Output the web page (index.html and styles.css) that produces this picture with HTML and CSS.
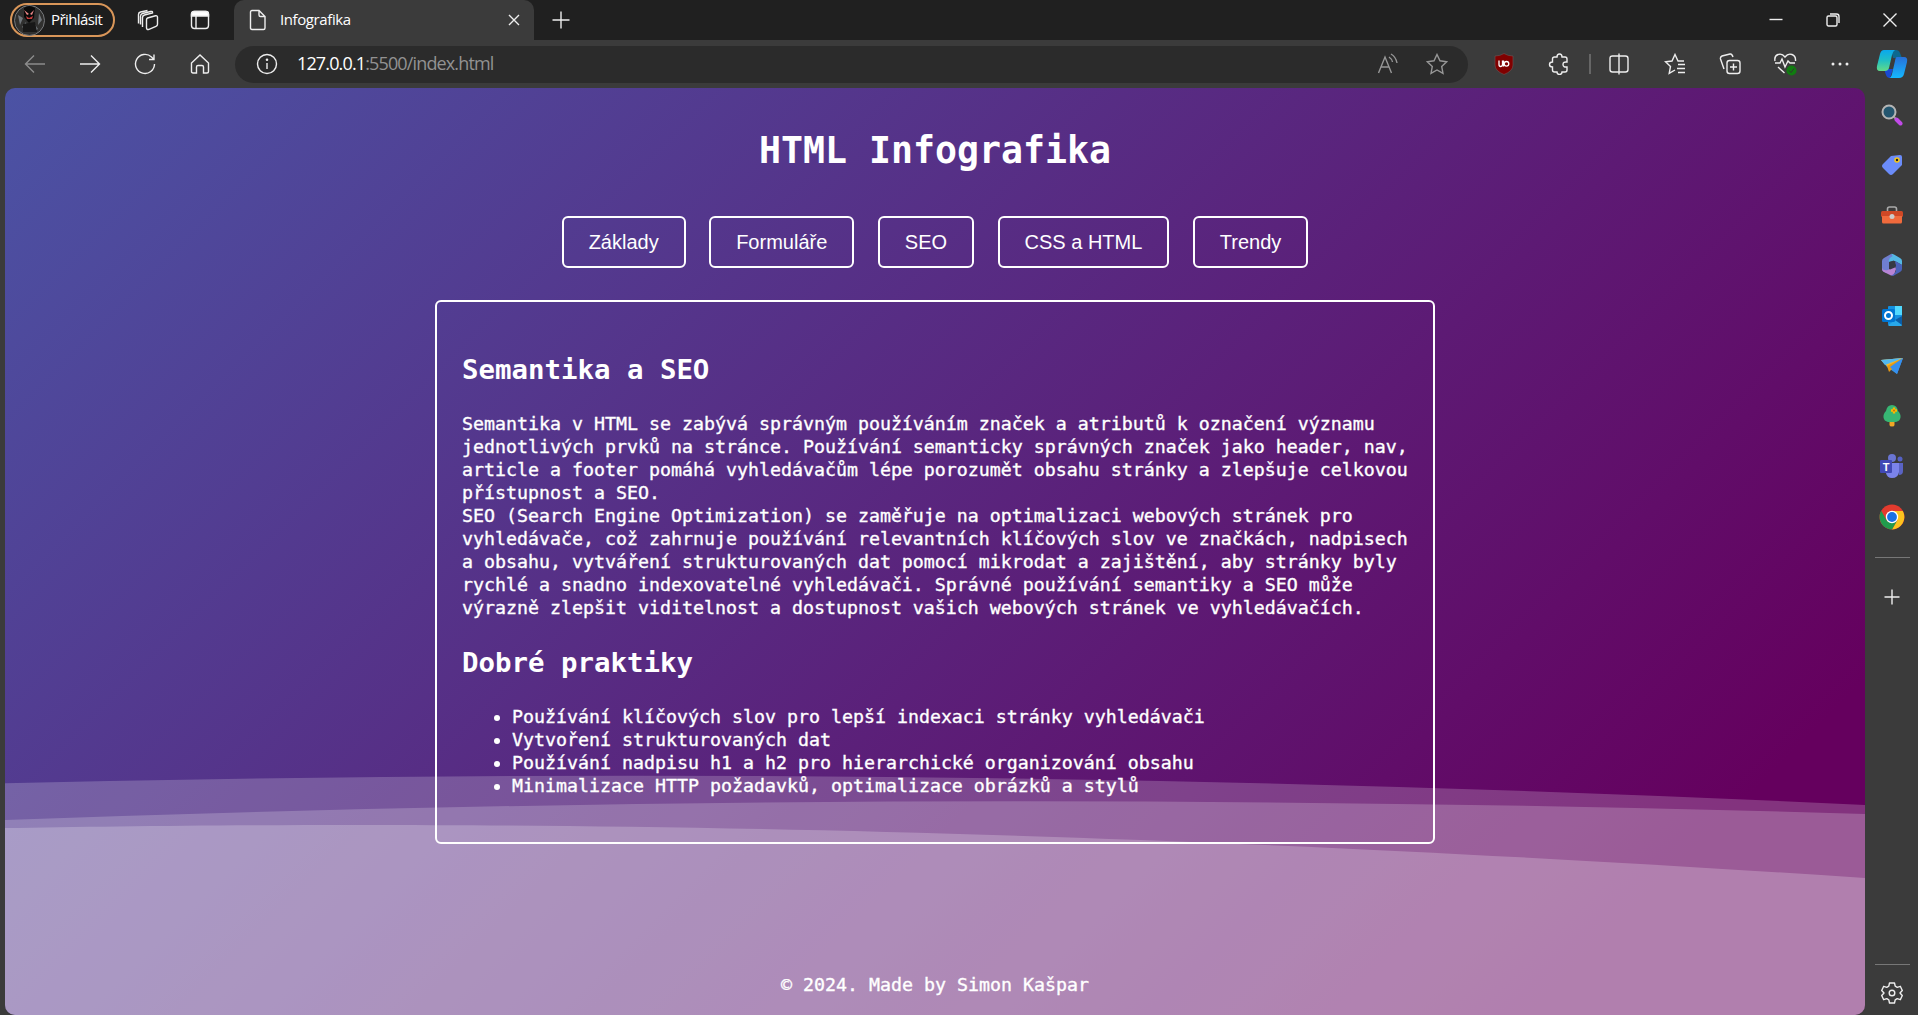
FILE: index.html
```html
<!DOCTYPE html>
<html lang="cs">
<head>
<meta charset="utf-8">
<title>Infografika</title>
<link rel="stylesheet" href="styles.css">
</head>
<body>
<header class="titlebar">
  <div class="profile">
    <svg class="avatar" width="31" height="31" viewBox="0 0 31 31"><circle cx="15.500" cy="15.500" r="15" fill="#30302f" stroke="#77797c"/><path d="M4 10l5 3-3 7zM25 8l3 7-4 5zM8 22l4-5 2 10zM20 18l4 6-5 3z" fill="#70757a"/><path d="M10 3q5-4 11 0l-1 10-5 5-5-6z" fill="#090909"/><path d="M10 5l5 4-2 1zM20 5l-4 4 2 1z" fill="#e88"/><path d="M12 11l3 2 4-2-1 3h-5z" fill="#c53b3b"/><path d="M9 19l12-2 2 10H9z" fill="#171717"/></svg>
    <span class="login">Přihlásit</span>
  </div>
  <div class="cell workspaces"><svg width="22" height="22" viewBox="0 0 22 22" class="line"><path d="M10.500 9l8-2.200q2-.4 2 1.500v7q0 1.500-1.500 2l-7 3q-2.500.8-2.500-1.500v-8q0-1.400 1-1.800z"/><path d="M6 17.500V8q0-2 2-2.500l8-2V2.500q0-1-2-.500l-8 2q-2 .500-2 3V15M2 14V5q0-2 2-2.500l7-1.500" transform="translate(-.5 .5)"/></svg></div>
  <div class="cell tab-actions"><svg width="20" height="20" viewBox="0 0 20 20" class="line"><rect x="1.500" y="1.500" width="17" height="17" rx="3"/><path d="M1.500 6V4q0-2.500 2.500-2.500h12q2.500 0 2.500 2.500v2z" fill="#fff"/><path d="M6 6v12"/></svg></div>
  <div class="tab">
    <svg width="18" height="22" viewBox="0 0 18 22" class="line"><path d="M3 1.500h7l6 6V19q0 1.500-1.500 1.500H3Q1.500 20.500 1.500 19V3Q1.500 1.500 3 1.500zM10 1.500V6q0 1.500 1.500 1.500H16"/></svg>
    <span class="tab-title">Infografika</span>
    <svg width="12" height="12" viewBox="0 0 12 12" class="line"><path d="M1 1l10 10M11 1L1 11"/></svg>
  </div>
  <div class="cell new-tab"><svg width="18" height="18" viewBox="0 0 18 18" class="line"><path d="M9 .5v17M.5 9h17"/></svg></div>
  <div class="window-controls">
    <div class="cell"><svg width="14" height="14" viewBox="0 0 14 14" class="line"><path d="M.5 6.500h13"/></svg></div>
    <div class="cell"><svg width="14" height="14" viewBox="0 0 14 14" class="line"><rect x="1" y="3" width="10" height="10" rx="1.500"/><path d="M4 1h6.500Q13 1 13 3.500V10"/></svg></div>
    <div class="cell"><svg width="14" height="14" viewBox="0 0 14 14" class="line"><path d="M.5.5l13 13M13.500.5l-13 13"/></svg></div>
  </div>
</header>
<nav class="toolbar">
  <div class="cell dim"><svg width="22" height="20" viewBox="0 0 22 20" class="line"><path d="M21 10H1.500M10 1.500L1.500 10l8.500 8.500"/></svg></div>
  <div class="cell"><svg width="22" height="20" viewBox="0 0 22 20" class="line"><path d="M1 10h19.500M12 1.500l8.500 8.500-8.500 8.500"/></svg></div>
  <div class="cell"><svg width="22" height="22" viewBox="0 0 22 22" class="line"><path d="M20.500 11a9.500 9.500 0 1 1-3-7l2 2M20 1.500V6.500h-5"/></svg></div>
  <div class="cell"><svg width="20" height="20" viewBox="0 0 20 20" class="line"><path d="M1.500 9L10 1l8.500 8v8.500q0 1.500-1.500 1.500h-3.500v-6q0-1.500-1.500-1.500H8q-1.500 0-1.500 1.500v6H3q-1.500 0-1.500-1.500z"/></svg></div>
  <div class="address">
    <svg width="22" height="22" viewBox="0 0 22 22" class="line"><circle cx="11" cy="11" r="9.500"/><path d="M11 10v6"/><circle cx="11" cy="6.800" r=".6"/></svg>
    <span class="url"><b>127.0.0.1</b>:5500/index.html</span>
    <svg class="read" width="22" height="22" viewBox="0 0 22 22"><path d="M1.500 20L8 4l6.500 16M4 14h8M12 4q3 2 3.500 5M14 1q5 3 6 9"/></svg>
    <svg class="star" width="22" height="22" viewBox="0 0 22 22"><path d="M11 1.500l3 6.300 6.700.900-5 4.700 1.300 7-6-3.400-6 3.400 1.300-7-5-4.700 6.700-.900z"/></svg>
  </div>
  <div class="cell shield"><svg width="20" height="22" viewBox="0 0 20 22"><path d="M10 .5Q14 3 19 3v9q0 6-9 9.500Q1 18 1 12V3q5 0 9-2.500z" fill="#800000" stroke="#6b5555" stroke-width=".6"/><path d="M5 7.500v4q0 2 1.700 2t1.800-2v-4M9.500 7.500v6" fill="none" stroke="#fff" stroke-width="1.300"/><circle cx="12.500" cy="10.800" r="2.300" fill="none" stroke="#fff" stroke-width="1.300"/></svg></div>
  <div class="cell"><svg width="22" height="22" viewBox="0 0 22 22" class="line"><path d="M6.500 4H9q0-3 2.500-3T14 4h3q2 0 2 2v3q-4-.5-4 2.500t4 2.500v3q0 2-2 2h-3q0 2.500-2.500 2.500T9 19H6.500q-2 0-2-2v-3Q1.500 14 1.500 11.500T4.500 9V6q0-2 2-2z"/></svg></div>
  <div class="separator"></div>
  <div class="cell"><svg width="22" height="22" viewBox="0 0 22 22" class="line"><path d="M8 3H4.500Q2 3 2 5.500v11Q2 19 4.500 19H8M14 3h3.500Q20 3 20 5.500v11q0 2.500-2.500 2.500H14M8 3h3M8 19h3M11 3h3M11 19h3M11 .5v21"/></svg></div>
  <div class="cell"><svg width="22" height="22" viewBox="0 0 22 22" class="line"><path d="M20 8h-6l-3-6.500L8 8l-6.500.8 5 4.600-1.300 7L11 17M14 11.500h7M13 15.500h8M14 19.500h7"/></svg></div>
  <div class="cell"><svg width="22" height="22" viewBox="0 0 22 22" class="line"><rect x="8" y="7.500" width="13" height="13" rx="2.500"/><path d="M14.500 10.500v7M11 14h7M5 16L1.500 6Q1 4 3 3l8-2q2-.5 3 3"/></svg></div>
  <div class="cell"><svg width="24" height="24" viewBox="0 0 24 24" class="line"><path d="M2 9Q1 4 5 2.500T12 5q3-4 7-2.500T22.500 9M2 11h5l2-4 3 8 3-6 2 2h5M5 15l6.500 6"/><circle cx="18.500" cy="18.500" r="5" fill="#107c10" stroke="none"/><path d="M16 18.500l2 2 3-4" stroke="#333" stroke-width="1"/></svg></div>
  <div class="cell"><svg width="18" height="6" viewBox="0 0 18 6" fill="#eee"><circle cx="2" cy="3" r="1.500"/><circle cx="9" cy="3" r="1.500"/><circle cx="16" cy="3" r="1.500"/></svg></div>
  <div class="cell copilot"><svg width="32" height="30" viewBox="0 0 32 30"><defs><linearGradient id="ca" x2="0" y2="1"><stop stop-color="#0aa8ee"/><stop offset=".5" stop-color="#21bfc4"/><stop offset="1" stop-color="#62db87"/></linearGradient><linearGradient id="cb" x2="0" y2="1"><stop stop-color="#2870d8"/><stop offset="1" stop-color="#14b8ff"/></linearGradient></defs><path d="M15 1h5q3 0 4 3l2 5h-9z" fill="#0c688f"/><path d="M8 20h9l-3 9q-3 0-4-3z" fill="#194ad2"/><path d="M8 1h11q-2 1-3 5l-3 13q-1 3-4 3H4q-4 0-3-5L4 5q1-4 4-4z" fill="url(#ca)"/><path d="M21 8h7q4 0 3 5l-3 12q-1 4-5 4H13q2 0 3-4l3-13q.5-4 2-4z" fill="url(#cb)"/></svg></div>
</nav>
<div class="workspace">
  <main class="page">
    <svg class="waves" viewBox="0 0 1860 927" preserveAspectRatio="none"><path d="M0 695.300Q930 672.700 1860 717V927H0z" opacity=".2"/><path d="M0 732Q930 698 1860 726V927H0z" opacity=".2"/><path d="M0 740C310 735 930 728 1860 790V927H0z" opacity=".225"/></svg>
    <h1>HTML Infografika</h1>
    <div class="topics">
      <button>Základy</button><button>Formuláře</button><button>SEO</button><button>CSS a HTML</button><button>Trendy</button>
    </div>
    <article class="card">
      <h2>Semantika a SEO</h2>
      <p>Semantika v HTML se zabývá správným používáním značek a atributů k označení významu<br>jednotlivých prvků na stránce. Používání semanticky správných značek jako header, nav,<br>article a footer pomáhá vyhledávačům lépe porozumět obsahu stránky a zlepšuje celkovou<br>přístupnost a SEO.<br>SEO (Search Engine Optimization) se zaměřuje na optimalizaci webových stránek pro<br>vyhledávače, což zahrnuje používání relevantních klíčových slov ve značkách, nadpisech<br>a obsahu, vytváření strukturovaných dat pomocí mikrodat a zajištění, aby stránky byly<br>rychlé a snadno indexovatelné vyhledávači. Správné používání semantiky a SEO může<br>výrazně zlepšit viditelnost a dostupnost vašich webových stránek ve vyhledávačích.</p>
      <h2>Dobré praktiky</h2>
      <ul>
        <li>Používání klíčových slov pro lepší indexaci stránky vyhledávači</li>
        <li>Vytvoření strukturovaných dat</li>
        <li>Používání nadpisu h1 a h2 pro hierarchické organizování obsahu</li>
        <li>Minimalizace HTTP požadavků, optimalizace obrázků a stylů</li>
      </ul>
    </article>
    <footer>© 2024. Made by Simon Kašpar</footer>
  </main>
  <aside class="sidebar">
    <div class="app"><svg width="22" height="22" viewBox="0 0 22 22"><path d="M12 12l3 3" stroke="#999" stroke-width="2"/><path d="M15.500 15.500l4 4" stroke="#c14ae8" stroke-width="4" stroke-linecap="round"/><circle cx="8" cy="8" r="6.500" fill="#24566f" stroke="#b5b5b5" stroke-width="2"/></svg></div>
    <div class="app"><svg width="22" height="22" viewBox="0 0 22 22"><path d="M10 2l9-1q2 0 2 2v8l-9 9q-2 2-4 0l-6-6q-2-2 0-4z" fill="#6b8cfa"/><circle cx="16" cy="6" r="2" fill="#222" stroke="#f4c51c" stroke-width="1.600"/></svg></div>
    <div class="app"><svg width="24" height="20" viewBox="0 0 24 20"><path d="M7.500 6V4q0-2 2-2h5q2 0 2 2v2" fill="none" stroke="#aaa" stroke-width="1.600"/><rect x="1" y="6" width="22" height="6" rx="1.500" fill="#cf4826"/><path d="M2 11h20v6q0 1.500-1.500 1.500h-17Q2 18.500 2 17z" fill="#f06a3c"/><circle cx="12" cy="11.500" r="2.500" fill="#ccc"/></svg></div>
    <div class="app"><svg width="22" height="24" viewBox="0 0 22 24"><path d="M10 1L3 5q-2 1-2 3v8q0 2 2 3l3 1 2-3V8q0-2 2-3l4-2z" fill="#6f7fd0"/><path d="M10 1q1-.5 3 .5l6 3.500q2 1 2 3v4l-7-4-6 1q-1-3 2-5 3-1 0-3z" fill="#54b8e4"/><path d="M1 15q1 3 6 2l7-4 1 3-2 6q-2 1-4 0l-6-3q-2-1-2-4z" fill="#b884d5"/><path d="M14 8l7 4v4q0 2-2 3l-6 3.500q-2 .5-3 0 5-2 5-6z" fill="#4a62ba"/><path d="M8 9l5-1.500 2 5-1 2-5 2-1-1z" fill="#363a44"/></svg></div>
    <div class="app"><svg width="22" height="22" viewBox="0 0 22 22"><rect x="7" y="1" width="14" height="19" rx="1" fill="#1490df"/><path d="M14 1h7v9h-7z" fill="#50d9ff"/><path d="M7 20l14-9v9q0 1-1 1H8z" fill="#28a8ea"/><path d="M14 15l7-4v9z" fill="#0a5ca5"/><rect x="1" y="4" width="13" height="13" rx="1.500" fill="#0075d2"/><circle cx="7.500" cy="10.500" r="3.500" fill="none" stroke="#fff" stroke-width="2"/></svg></div>
    <div class="app"><svg width="24" height="18" viewBox="0 0 24 18"><path d="M1 3l22-2-6 16-10-7z" fill="#369be8"/><path d="M1 3l22-2L8 10z" fill="#f5b92b"/><path d="M1 3l22-2L5 8z" fill="#52b9f1"/><path d="M7 9l16-8L9 15z" fill="#e79a16"/><path d="M10 10L23 1l-6 16z" fill="#368ff0"/></svg></div>
    <div class="app"><svg width="20" height="24" viewBox="0 0 20 24"><path d="M7.500 16h5v5q0 1.500-2.500 1.500T7.500 21z" fill="#f0a726"/><path d="M10 1q5 0 6 6 3 3 2.500 6.500T14 18H6Q2 17 1.500 13.500T4 7q1-6 6-6z" fill="#37b673"/><path d="M12 3.500v6M9 6.500h6" stroke="#ffb800" stroke-width="2.400"/><circle cx="12" cy="6.500" r="1" fill="#bd6f12"/></svg></div>
    <div class="app"><svg width="26" height="26" viewBox="0 0 26 26"><circle cx="13" cy="5" r="4" fill="#6a75d3"/><circle cx="21" cy="6" r="2.500" fill="#5561c4"/><path d="M18 10h6v8q0 4-4 4z" fill="#5a63c4"/><path d="M8 10h12v9q-1 6-7 6-5 0-6-5z" fill="#7b83eb"/><rect x="1" y="7" width="12" height="13" rx="1" fill="#4149b5"/><text x="7" y="17.500" class="teams-letter">T</text></svg></div>
    <div class="app"><svg width="26" height="26" viewBox="0 0 26 26"><circle cx="13" cy="13" r="12.500" fill="#e33b2e"/><path d="M13 25.500A12.500 12.500 0 0 0 23.800 7H13l5.500 9z" fill="#fcc31e"/><path d="M2.200 6.800L8 17l5 2 5-2.200-5 8.700A12.500 12.500 0 0 1 2.200 6.800z" fill="#219b4c"/><circle cx="13" cy="13" r="6.200" fill="#fff"/><circle cx="13" cy="13" r="4.900" fill="#1b70e5"/></svg></div>
    <div class="rule"></div>
    <div class="add"><svg width="16" height="16" viewBox="0 0 16 16" class="line"><path d="M8 .5v15M.5 8h15"/></svg></div>
    <div class="rule bottom"></div>
    <div class="settings"><svg width="22" height="22" viewBox="0 0 22 22" class="line"><path d="M8.500 1h5l.7 3.200 2 1.100 3.100-1 2 4.200L19 11l2.300 2.500-2 4.200-3.100-1-2 1.100-.7 3.200h-5l-.7-3.200-2-1.100-3.100 1-2-4.200L3 11 .7 8.500l2-4.200 3.100 1 2-1.100z" stroke-linejoin="round"/><circle cx="11" cy="11" r="2.800"/></svg></div>
  </aside>
</div>
</body>
</html>
```
FILE: styles.css
```css
* { box-sizing: border-box; }
body {
  margin: 0;
  width: 1918px;
  height: 1015px;
  overflow: hidden;
  background: #3b3b3b;
  color: #fff;
  font-family: "Open Sans", "Noto Sans", sans-serif;
}
svg { display: block; flex: none; }
.line { fill: none; stroke: #eee; stroke-width: 1.4; }
.cell { display: flex; align-items: center; justify-content: center; width: 55px; height: 100%; flex: none; }

.titlebar { display: flex; align-items: center; height: 40px; background: #202020; }
.profile {
  display: flex;
  align-items: center;
  gap: 6px;
  width: 105px;
  height: 34px;
  margin-left: 10px;
  padding-left: 2px;
  border: 2px solid #d99659;
  border-radius: 17px;
  background: #1d1d1d;
}
.login { font-size: 15px; letter-spacing: -0.6px; line-height: 28px; padding-bottom: 2px; white-space: nowrap; }
.workspaces { margin-left: 5px; }
.tab-actions { width: 50px; }
.tab {
  display: flex;
  align-items: center;
  width: 300px;
  height: 40px;
  margin-left: 9px;
  padding: 0 14px 0 15px;
  border-radius: 10px 10px 0 0;
  background: #3b3b3b;
}
.tab-title { flex: 1; margin-left: 13px; padding-bottom: 2px; font-size: 15px; letter-spacing: -0.4px; }
.new-tab { width: 54px; }
.window-controls { display: flex; height: 100%; margin-left: auto; padding-right: -1px; }
.window-controls .cell { width: 57px; }

.toolbar { display: flex; align-items: center; height: 48px; padding-left: 7px; }
.dim { opacity: .45; }
.address {
  display: flex;
  align-items: center;
  width: 1233px;
  height: 37px;
  margin-left: 8px;
  padding-left: 21px;
  border-radius: 19px;
  background: #2b2b2b;
}
.url { flex: 1; margin-left: 19px; padding-bottom: 2px; font-size: 18px; letter-spacing: -0.86px; color: #929292; }
.url b { font-weight: 400; color: #fff; }
.read, .star { fill: none; stroke: #979797; stroke-width: 1.4; }
.read { margin-right: 27px; }
.star { margin-right: 20px; }
.shield { width: 72px; }
.toolbar .shield + .cell { width: 38px; }
.separator { width: 2px; height: 20px; margin: 0 0 0 11px; background: #666; }
.separator + .cell { width: 56px; }
.copilot { width: 50px; }

.workspace { display: flex; height: 927px; }
.page {
  position: relative;
  width: 1860px;
  height: 927px;
  margin-left: 5px;
  border-radius: 10px;
  overflow: hidden;
  font-family: "DejaVu Sans Mono", monospace;
  font-size: 18.27px;
  background: linear-gradient(315deg, #65005e 3%, #3c84ce 38%, #30eee2 68%, #ff1919 98%) 100% 100% / 400% 400%;
}
.waves { position: absolute; inset: 0; width: 100%; height: 100%; fill: #fff; }
.page > :not(.waves) { position: relative; }
h1 { margin: 0; padding-top: 39px; height: 128px; font-size: 36.54px; line-height: 47px; text-align: center; }
.topics { display: flex; justify-content: center; gap: 23.5px; }
.topics button {
  height: 52px;
  padding: 0 25px;
  border: 2px solid #fff;
  border-radius: 6px;
  background: transparent;
  color: #fff;
  font: 20px "Liberation Sans", Arial, sans-serif;
}
.card {
  width: 1000px;
  height: 544px;
  margin: 32px auto 0;
  padding: 50px 25px 0;
  border: 2px solid #fff;
  border-radius: 6px;
  white-space: nowrap;
  line-height: 23px;
}
h2 { margin: 0; font-size: 27.4px; line-height: 35px; }
.card p { margin: 25px 0 26px; }
.card ul { margin: 25px 0 0; padding-left: 50px; }
.card p, .card ul, footer { -webkit-text-stroke: 0.35px #fff; }
footer { margin-top: 129px; line-height: 24px; text-align: center; }

.sidebar { display: flex; flex-direction: column; align-items: center; width: 53px; padding: 1.5px 0 0 1px; }
.app { display: flex; align-items: center; justify-content: center; height: 50.25px; }
.teams-letter { fill: #fff; font: bold 11px "Liberation Sans", sans-serif; text-anchor: middle; }
.rule { width: 35px; height: 1px; margin-top: 15px; background: #777; }
.add { margin-top: 31px; }
.rule.bottom { margin-top: auto; }
.settings { margin: 17px 0 11px; }
```
